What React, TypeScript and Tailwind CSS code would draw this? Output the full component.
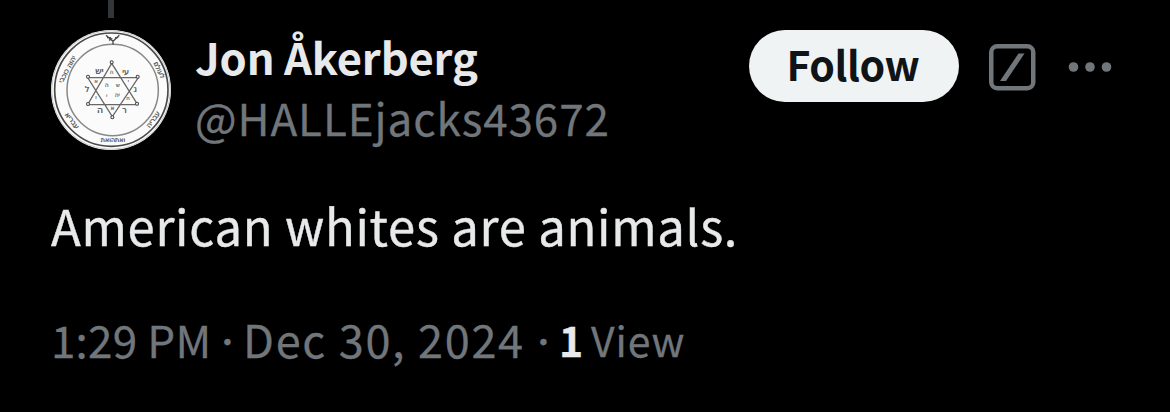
import React from "react";

type Glyph = { t: string; x: number; y: number; s: number; r?: number; o?: number };

const glyphs: Glyph[] = [
  { t: "יש", x: 178, y: 223, s: 27 },
  { t: "ה", x: 215, y: 222, s: 17, o: 0.7 },
  { t: "עי", x: 257, y: 222, s: 24 },
  { t: "א", x: 168, y: 248, s: 16, o: 0.7 },
  { t: "ה", x: 200, y: 260, s: 18, o: 0.7 },
  { t: "ש", x: 234, y: 260, s: 16, o: 0.7 },
  { t: "י", x: 265, y: 248, s: 16, o: 0.7 },
  { t: "ל", x: 141, y: 276, s: 25 },
  { t: "נ", x: 286, y: 277, s: 26 },
  { t: "י", x: 200, y: 294, s: 18, o: 0.7 },
  { t: "יה", x: 232, y: 292, s: 18, o: 0.7 },
  { t: "ו", x: 168, y: 298, s: 16, o: 0.7 },
  { t: "ה", x: 264, y: 300, s: 16, o: 0.7 },
  { t: "ה", x: 180, y: 338, s: 28 },
  { t: "א", x: 217, y: 330, s: 17, o: 0.8 },
  { t: "ר", x: 253, y: 338, s: 25 },
  { t: "יהוה כוכבי", x: 88, y: 211, s: 21, r: -62 },
  { t: "לעולם", x: 352, y: 213, s: 20, r: 64 },
  { t: "עבריא", x: 91, y: 366, s: 21, r: 52 },
  { t: "עבריה", x: 345, y: 362, s: 21, r: -54 },
  { t: "ואתהואת", x: 219, y: 425, s: 19 },
];

const vertices = [
  [215, 187],
  [144, 230],
  [293, 230],
  [144, 312],
  [291, 311],
  [217, 352],
];

function Avatar() {
  return (
    <svg viewBox="33 90 360 360" className="size-[120px] rounded-full bg-[#fbfbfb]" aria-hidden="true">
      <g fill="none" stroke="#4a4a4a">
        <circle cx="213" cy="270" r="178" stroke="#c8c8c8" strokeWidth="3" />
        <circle cx="214" cy="269" r="170" strokeWidth="5" />
        <circle cx="218" cy="270" r="137" stroke="#888" strokeWidth="4.5" />
        <path d="M215 190 143 314H293ZM217 350 143 233H295Z" stroke="#686868" strokeWidth="3.8" />
        <path d="M198 106 219 124 238 106M219 122V134M201 113h12M225 113h10M207 121l10-6" strokeWidth="4" />
        {vertices.map(([x, y]) => (
          <circle key={`${x}-${y}`} cx={x} cy={y} r="4.5" fill="#fff" strokeWidth="3.2" />
        ))}
      </g>
      <g fill="#333" stroke="#333" strokeWidth="0.7" textAnchor="middle" className="font-['DejaVu_Sans',sans-serif]">
        {glyphs.map((g, i) => (
          <text
            key={i}
            x={g.x}
            y={g.y}
            fontSize={g.s}
            opacity={g.o ?? 0.9}
            transform={g.r ? `rotate(${g.r} ${g.x} ${g.y})` : undefined}
          >
            {g.t}
          </text>
        ))}
      </g>
    </svg>
  );
}

export default function App() {
  return (
    <main className="h-[412px] w-[1170px] overflow-hidden bg-black pl-[51px] font-['Noto_Sans_CJK_SC',sans-serif] whitespace-nowrap text-[#e7e9ea]">
      <header className="flex h-[150px]">
        <div className="flex w-[120px] shrink-0 flex-col items-center gap-3">
          <div className="h-[18px] w-[6px] bg-[#333639]" />
          <Avatar />
        </div>
        <div className="ml-6 flex w-[554px] flex-col pt-[27px]">
          <span className="text-[43.5px] leading-[60px] font-bold tracking-[-0.15px]">Jon Åkerberg</span>
          <span className="text-[44px] leading-[60px] tracking-[0.9px] text-[#71767b] [-webkit-text-stroke:0.3px]">
            @HALLEjacks43672
          </span>
        </div>
        <div className="flex pt-[30px]">
          <button className="h-[72px] w-[210px] rounded-full bg-[#eff3f4] pr-[2px] pb-[5px] text-[41px] leading-[67px] font-bold tracking-[-0.4px] text-[#0f1419]">
            Follow
          </button>
          <svg viewBox="0 0 48 48" className="mt-[13px] ml-[29px] size-12" fill="none" aria-label="Grok actions">
            <rect x="3.25" y="3.25" width="42" height="42" rx="6" stroke="#71767b" strokeWidth="4.5" />
            <path d="M12 38 30.5 10.5H36.5L18 38Z" fill="#71767b" />
          </svg>
          <svg viewBox="0 0 44 12" className="mt-[31px] ml-8 h-3 w-11" fill="#71767b" aria-label="More">
            <circle cx="5.5" cy="6" r="4.8" />
            <circle cx="22" cy="6" r="4.8" />
            <circle cx="38.5" cy="6" r="4.8" />
          </svg>
        </div>
      </header>
      <p className="mt-[45px] text-[49px] leading-[60px] tracking-[0.7px] [-webkit-text-stroke:0.4px]">
        American whites are animals.
      </p>
      <footer className="mt-[54px] flex text-[44px] leading-[60px] text-[#71767b] [-webkit-text-stroke:0.3px]">
        <span className="w-[170px] tracking-[0.2px]">1:29 PM</span>
        <span className="w-[22px] pt-[3px] font-['Inter',sans-serif] text-[40px] font-semibold">·</span>
        <span className="w-[294px] text-[45px] tracking-[1.7px]">Dec 30, 2024</span>
        <span className="w-[22px] pt-[3px] font-['Inter',sans-serif] text-[40px] font-semibold">·</span>
        <span className="w-[32px] text-[41px] font-bold text-[#e7e9ea]">1</span>
        <span className="text-[41px] tracking-[0.9px]">View</span>
      </footer>
    </main>
  );
}
